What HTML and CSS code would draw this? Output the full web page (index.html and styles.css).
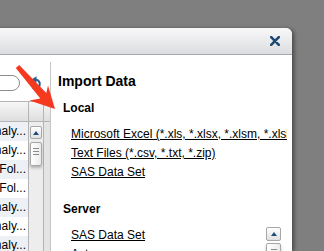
FILE: index.html
```html
<!DOCTYPE html>
<html lang="en">
<head>
    <meta charset="UTF-8">
    <meta name="viewport" content="width=device-width, initial-scale=1.0">
    <title>Import Data</title>
    <link rel="stylesheet" href="styles.css">
</head>
<body>

<div class="stage">
    <!-- Import dialog (left part runs off screen) -->
    <div class="dialog">
        <div class="dialog-titlebar">
            <button class="close-btn" aria-label="Close">
                <svg width="10" height="10" viewBox="0 0 10 10">
                    <path d="M1.2 1.2 L8.8 8.8 M8.8 1.2 L1.2 8.8" stroke="#1f4a73" stroke-width="2.6" stroke-linecap="round"/>
                </svg>
            </button>
        </div>

        <div class="dialog-body">
            <!-- library browser -->
            <div class="side-panel">
                <div class="search-row">
                    <input class="search-input" type="text">
                    <span class="refresh-icon">
                        <svg width="14" height="16" viewBox="0 0 14 16">
                            <path d="M6.5 4.5 A4.5 4.5 0 1 1 3.5 12.5" fill="none" stroke="#2b5d91" stroke-width="2.2"/>
                            <polygon points="2.5,4.5 7.5,1.2 7.5,7.8" fill="#2b5d91"/>
                        </svg>
                    </span>
                </div>

                <div class="lib-table">
                    <div class="lib-head">
                        <div class="col-name"></div>
                        <div class="col-bar"></div>
                        <div class="col-fill"></div>
                    </div>
                    <div class="lib-body">
                        <div class="lib-rows">
                            <div class="lib-row">Analy...</div>
                            <div class="lib-row">Analy...</div>
                            <div class="lib-row">Fol...</div>
                            <div class="lib-row">Fol...</div>
                            <div class="lib-row">Analy...</div>
                            <div class="lib-row">Analy...</div>
                            <div class="lib-row">Analy...</div>
                        </div>
                        <div class="col-bar vscroll">
                            <div class="scroll-btn"><span class="scroll-arrow"></span></div>
                            <div class="scroll-thumb"><i></i><i></i><i></i></div>
                        </div>
                        <div class="col-fill"></div>
                    </div>
                </div>
            </div>

            <!-- import choices -->
            <div class="main-panel">
                <h2 class="panel-title">Import Data</h2>

                <h3 class="group-title">Local</h3>
                <ul class="link-list">
                    <li><a href="#">Microsoft Excel (*.xls, *.xlsx, *.xlsm, *.xlsb)</a></li>
                    <li><a href="#">Text Files (*.csv, *.txt, *.zip)</a></li>
                    <li><a href="#">SAS Data Set</a></li>
                </ul>

                <h3 class="group-title server-title">Server</h3>
                <div class="server-list">
                    <ul class="link-list">
                        <li><a href="#">SAS Data Set</a></li>
                        <li><a href="#">Astore</a></li>
                    </ul>
                    <div class="vscroll-right">
                        <div class="scroll-btn"><span class="scroll-arrow"></span></div>
                        <div class="scroll-thumb"><i></i><i></i><i></i></div>
                    </div>
                </div>
            </div>
        </div>
    </div>
</div>

<!-- red callout arrow drawn over the dialog -->
<svg class="callout-arrow" width="324" height="251" viewBox="0 0 324 251">
    <polygon points="19.2,65 46.3,93.1 48,85.5 55,109 29.5,100.5 40.3,98.4 15.8,68" fill="#f5391f"/>
</svg>

</body>
</html>
```

FILE: styles.css
```css
* {
    box-sizing: border-box;
}

body {
    margin: 0;
    height: 251px;
    overflow: hidden;
    background-color: #7f7f7f;
    font-family: "Liberation Sans", Arial, sans-serif;
    color: #000;
}

.stage {
    padding-top: 28px;
}

/* dialog shell */
.dialog {
    margin-left: -150px;
    width: 442px;
    height: 223px;
    background-color: #ffffff;
    border-top-right-radius: 6px;
    box-shadow: 2px 1px 4px rgba(0,0,0,0.45);
    overflow: hidden;
}

.dialog-titlebar {
    height: 27px;
    display: flex;
    align-items: center;
    justify-content: flex-end;
    padding-right: 12px;
    background: linear-gradient(#f8f8f9, #dcdde0);
    border-bottom: 1px solid #a6a8ab;
    border-top-right-radius: 6px;
}

.close-btn {
    width: 10px;
    height: 10px;
    padding: 0;
    border: none;
    background: none;
    display: flex;
    cursor: pointer;
}

.dialog-body {
    display: flex;
    padding-top: 7px;
    height: 196px;
}

/* left: library browser */
.side-panel {
    flex: none;
    width: 201px;
    border-right: 1px solid #c6c6c6;
    padding-top: 13px;
    overflow: hidden;
}

.search-row {
    display: flex;
    align-items: center;
    height: 16px;
}

.search-input {
    flex: 1;
    min-width: 0;
    height: 16px;
    padding: 0 6px;
    border: 1px solid #8e8e8e;
    border-radius: 8px;
    background: #fff;
    outline: none;
}

.refresh-icon {
    display: flex;
    width: 14px;
    height: 16px;
    margin: 0 7px 0 9px;
}

.lib-table {
    margin-top: 10px;
}

.lib-head {
    display: flex;
    height: 21px;
    background: linear-gradient(#f7f7f7, #dedede);
    border-top: 1px solid #b4b4b4;
    border-bottom: 1px solid #b4b4b4;
}

.col-name {
    flex: 1;
}

.col-bar {
    flex: none;
    width: 16px;
    border-left: 1px solid #b4b4b4;
    border-right: 1px solid #b4b4b4;
}

.col-fill {
    flex: none;
    width: 6px;
}

.lib-body {
    display: flex;
    height: 140px;
}

.lib-body .col-fill {
    background-color: #e4e4e4;
}

.lib-rows {
    flex: 1;
    min-width: 0;
}

.lib-row {
    height: 19px;
    line-height: 19px;
    font-size: 12px;
    text-align: right;
    padding-right: 2px;
    white-space: nowrap;
    overflow: hidden;
}

.lib-row:nth-child(odd) {
    background-color: #edf0f4;
}

.vscroll {
    background-color: #ededed;
    padding: 0 1px;
}

/* scrollbar parts, shared */
.scroll-btn {
    height: 13px;
    margin-top: 4px;
    border: 1px solid #a7a7a7;
    border-radius: 2px;
    background: linear-gradient(#ffffff, #e1e1e1);
    display: flex;
    align-items: center;
    justify-content: center;
}

.scroll-arrow {
    width: 0;
    height: 0;
    border-left: 3px solid transparent;
    border-right: 3px solid transparent;
    border-bottom: 4px solid #1f4e7d;
}

.scroll-thumb {
    height: 24px;
    margin-top: 3px;
    border: 1px solid #a7a7a7;
    border-radius: 2px;
    background: linear-gradient(90deg, #ffffff, #ebebeb);
    box-shadow: 0 2px 3px rgba(0,0,0,0.25);
    display: flex;
    flex-direction: column;
    align-items: center;
    gap: 2px;
    padding-top: 5px;
}

.scroll-thumb i {
    display: block;
    width: 6px;
    height: 1px;
    background-color: #8a8a8a;
}

/* right: import choices */
.main-panel {
    flex: 1;
    min-width: 0;
    padding: 11px 5px 0 7px;
    overflow: hidden;
}

.panel-title {
    margin: 0;
    font-size: 14px;
    line-height: 16px;
    font-weight: bold;
}

.group-title {
    margin: 12px 0 0 5px;
    font-size: 12px;
    line-height: 14px;
    font-weight: bold;
}

.server-title {
    margin-top: 20px;
}

.link-list {
    list-style: none;
    margin: 10px 0 0;
    padding-left: 13px;
    overflow: hidden;
}

.link-list li {
    height: 19px;
    line-height: 19px;
    font-size: 12px;
    white-space: nowrap;
}

.link-list a {
    color: #000;
    text-decoration: underline;
}

.server-list {
    display: flex;
    margin-top: 10px;
    padding-right: 6px;
}

.server-list .link-list {
    flex: 1;
    margin-top: 0;
}

.vscroll-right {
    flex: none;
    width: 15px;
}

.vscroll-right .scroll-btn {
    height: 14px;
    margin-top: 1px;
}

.vscroll-right .scroll-thumb {
    margin-top: 2px;
}

.callout-arrow {
    position: absolute;
    left: 0;
    top: 0;
    pointer-events: none;
}
```
